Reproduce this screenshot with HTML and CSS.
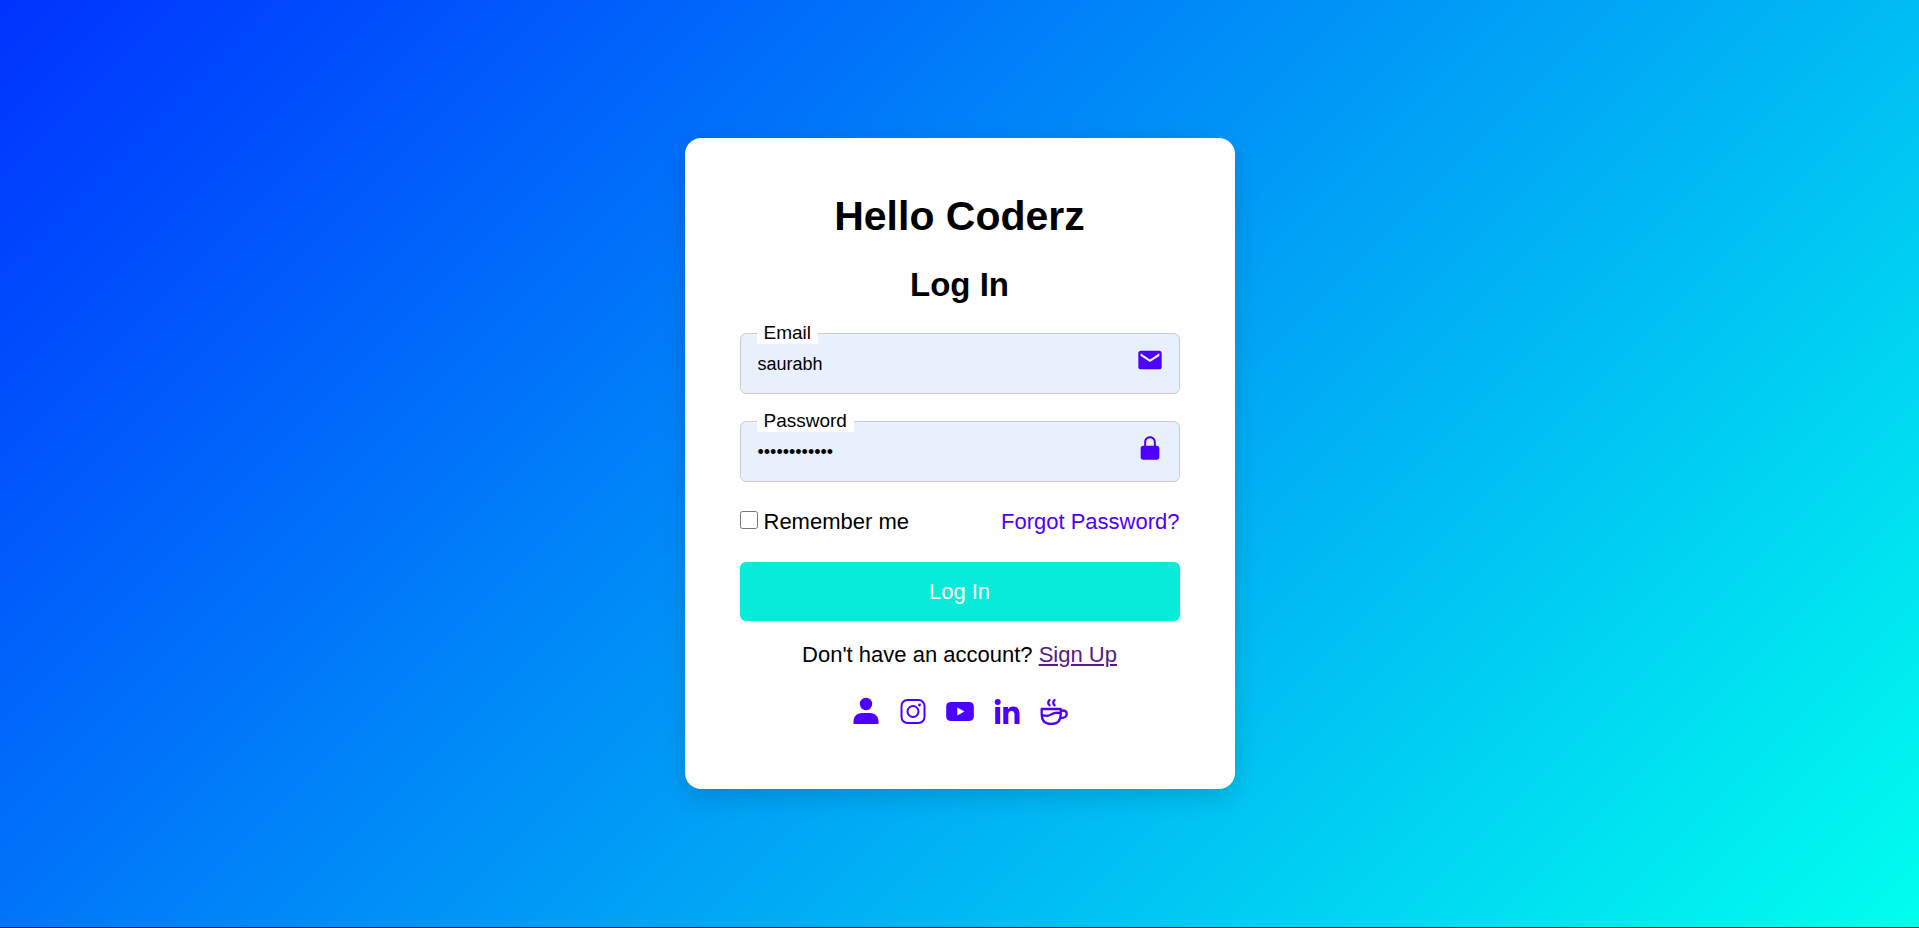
FILE: index.html
```html
<!DOCTYPE html>
<html lang="en">
<head>
<meta charset="utf-8">
<meta name="viewport" content="width=device-width, initial-scale=1">
<title>Log In</title>
<link rel="stylesheet" href="styles.css">
</head>
<body>
<main class="card">
  <h1 class="brand">Hello Coderz</h1>
  <h2 class="title">Log In</h2>
  <form class="form">
    <div class="field">
      <label class="field-label" for="email">Email</label>
      <input class="field-input" id="email" type="text" value="saurabh">
      <svg class="field-icon" viewBox="0 0 24 24" aria-hidden="true"><path d="M20 4H4c-1.100 0-2 .9-2 2v12c0 1.100.9 2 2 2h16c1.100 0 2-.9 2-2V6c0-1.100-.9-2-2-2zm0 4.500l-8 5.300-8-5.300V6.200l8 5.300 8-5.300z"/></svg>
    </div>
    <div class="field">
      <label class="field-label" for="password">Password</label>
      <input class="field-input" id="password" type="password" value="abcdefghijkl">
      <svg class="field-icon" viewBox="0 0 24 24" aria-hidden="true"><path d="M20 12c0-1.103-.897-2-2-2h-1V7c0-2.757-2.243-5-5-5S7 4.243 7 7v3H6c-1.103 0-2 .897-2 2v8c0 1.103.897 2 2 2h12c1.103 0 2-.897 2-2v-8zM8.700 7c0-1.900 1.400-3.300 3.300-3.300s3.300 1.400 3.300 3.300v3H8.700V7z"/></svg>
    </div>
    <div class="options">
      <label class="remember" for="remember"><input class="check" id="remember" type="checkbox">Remember me</label>
      <a class="forgot" href="#">Forgot Password?</a>
    </div>
    <button class="submit" type="submit">Log In</button>
  </form>
  <p class="signup">Don't have an account? <a class="signup-link" href="#">Sign Up</a></p>
  <nav class="social" aria-label="Social links">
    <a class="social-link" href="#" aria-label="Profile"><svg class="social-icon" viewBox="0 0 28 28"><circle cx="14" cy="7" r="6.200"/><path d="M1.500 27v-2.500c0-5 3.500-8.500 8.500-8.500h8c5 0 8.500 3.500 8.500 8.500V27z"/></svg></a>
    <a class="social-link" href="#" aria-label="Instagram"><svg class="social-icon" viewBox="0 0 28 28"><rect class="stroke" x="2.500" y="3" width="23" height="23" rx="6"/><circle class="stroke" cx="14" cy="14.500" r="5.500"/><circle cx="20.500" cy="8" r="1.400"/></svg></a>
    <a class="social-link" href="#" aria-label="YouTube"><svg class="social-icon" viewBox="0 0 28 28"><path d="M5 5h18c3 0 4.800 1.700 4.800 4.500v10c0 2.800-1.800 4.500-4.800 4.500H5c-3 0-4.800-1.700-4.800-4.500v-10C.2 6.700 2 5 5 5zm6.300 5.400v8l7.200-4z"/></svg></a>
    <a class="social-link" href="#" aria-label="LinkedIn"><svg class="social-icon" viewBox="0 0 28 28"><circle cx="4.700" cy="5" r="3"/><path d="M2.200 10h5v17h-5zM10.300 10h4.800v2.300c.8-1.500 2.500-2.700 5-2.700 5 0 6.400 3.200 6.400 7.900V27h-5v-8.500c0-2.300-.3-4.500-2.900-4.500-2.700 0-3.300 2-3.300 4.400V27h-5z"/></svg></a>
    <a class="social-link" href="#" aria-label="Coffee"><svg class="social-icon" viewBox="0 0 28 28"><path class="stroke bold" d="M1.700 12h19v5.500c0 6-3.500 9.500-9.500 9.500s-9.500-3.500-9.500-9.500zM20.700 13.500h1.800c2.500 0 4.200 1.300 4.200 3.500 0 2.500-2.300 4-6.200 4M2 18.200c5 .8 5.500 1 9-.8 3.500-2 5.500-2.200 9.500-1.200M9.500 3c-1.700 1.800-1.700 3.500 0 5.300M14.500 3c-1.700 1.800-1.700 3.500 0 5.300"/></svg></a>
  </nav>
</main>
</body>
</html>
```
FILE: styles.css
```css
* {
  box-sizing: border-box;
  margin: 0;
  padding: 0;
}

html {
  background: #000;
}

body {
  display: flex;
  align-items: center;
  justify-content: center;
  min-height: calc(100vh - 1px);
  background: linear-gradient(135deg, #0033ff, #00ffee) no-repeat;
  font-family: "Liberation Sans", Arial, sans-serif;
  font-size: 22px;
  line-height: 25px;
  color: #000;
}

.card {
  width: 100%;
  max-width: 550px;
  padding: 55px;
  border-radius: 16px;
  background: #fff;
  box-shadow: 0 8px 24px rgba(0, 0, 0, 0.15);
}

.brand {
  margin-bottom: 27px;
  font-size: 41px;
  line-height: 46px;
  text-align: center;
}

.title {
  margin-bottom: 29px;
  font-size: 33px;
  line-height: 38px;
  text-align: center;
}

.form {
  display: flex;
  flex-direction: column;
  gap: 27px;
}

.field {
  position: relative;
}

.field-label {
  position: absolute;
  top: -11px;
  left: 17px;
  padding: 0 7px;
  background: #fff;
  font-size: 19px;
  line-height: 22px;
}

.field-input {
  display: block;
  width: 100%;
  height: 61px;
  padding: 2px 56px 0 17px;
  border: 1px solid #ccc;
  border-radius: 6px;
  background: #e8f0fe;
  color: #000;
  font-family: inherit;
  font-size: 18px;
}

.field-icon {
  position: absolute;
  top: 13px;
  right: 16px;
  width: 28px;
  height: 28px;
  fill: #4d00ff;
}

.options {
  display: flex;
  justify-content: space-between;
  padding-bottom: 1px;
}

.remember {
  display: flex;
  gap: 6px;
}

.check {
  width: 18px;
  height: 18px;
  margin-top: 2px;
}

.forgot {
  color: #4d00ff;
  text-decoration: none;
}

.submit {
  height: 59px;
  padding-top: 1px;
  border: 0;
  border-radius: 6px;
  background: #06ebda;
  color: #fff;
  font-family: inherit;
  font-size: 22px;
}

.signup {
  margin: 21px 0 30px;
  text-align: center;
}

.signup-link {
  color: #551a8b;
}

.social {
  display: flex;
  justify-content: center;
  gap: 19px;
  padding-bottom: 9px;
}

.social-link {
  display: flex;
}

.social-icon {
  width: 28px;
  height: 28px;
  fill: #4d00ff;
}

.stroke {
  fill: none;
  stroke: #4d00ff;
  stroke-width: 2;
  stroke-linecap: round;
  stroke-linejoin: round;
}

.bold {
  stroke-width: 2.3;
}
```
